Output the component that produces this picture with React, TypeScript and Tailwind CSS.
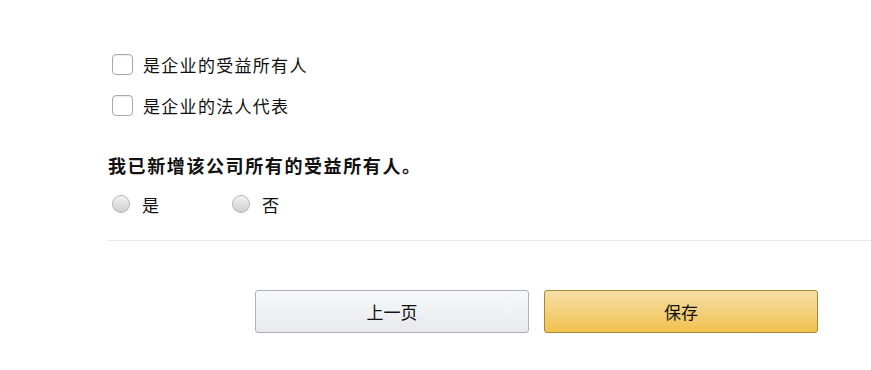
import React from "react";

const font = { fontFamily: '"Noto Sans CJK SC", "Liberation Sans", sans-serif' };

function Checkbox({ label }: { label: string }) {
  return (
    <label className="flex items-center h-[21px]">
      <span className="ml-[4px] w-[21px] h-[21px] rounded-[4px] border border-[#a9a9a9] bg-white shadow-[inset_0_1px_1px_rgba(0,0,0,0.08)]" />
      <span className="ml-[10px] text-[17px] leading-none text-[#111] tracking-[1.3px]">{label}</span>
    </label>
  );
}

function Radio({ label, className }: { label: string; className?: string }) {
  return (
    <label className={"flex items-center " + (className ?? "")}>
      <span className="ml-[4px] w-[18px] h-[18px] rounded-full border border-[#b5b5b5] bg-gradient-to-b from-[#f2f2f2] to-[#cfcfcf]" />
      <span className="ml-[12px] text-[17px] leading-none text-[#111]">{label}</span>
    </label>
  );
}

export default function App() {
  return (
    <div className="w-[871px] h-[370px] bg-white overflow-hidden" style={font}>
      <div className="pl-[108px] pt-[54px]">
        <div className="flex flex-col gap-[20px]">
          <Checkbox label="是企业的受益所有人" />
          <Checkbox label="是企业的法人代表" />
        </div>
        <div className="mt-[40px] text-[18px] font-bold leading-none text-[#111] tracking-[1.6px]">
          我已新增该公司所有的受益所有人。
        </div>
        <div className="mt-[21px] flex items-center h-[18px]">
          <Radio label="是" className="w-[120px]" />
          <Radio label="否" />
        </div>
        <div className="mt-[27px] h-px bg-[#e7e7e7]" />
        <div className="mt-[49px] flex gap-[15px] pl-[147px]">
          <button className="w-[274px] h-[43px] rounded-[3px] border border-[#adb1b8] bg-gradient-to-b from-[#f7f8fa] to-[#e7e9ec] text-[17px] text-[#111]">
            上一页
          </button>
          <button className="w-[274px] h-[43px] rounded-[3px] border border-[#a88734] bg-gradient-to-b from-[#f7dfa5] to-[#f0c14b] text-[17px] text-[#111]">
            保存
          </button>
        </div>
      </div>
    </div>
  );
}
